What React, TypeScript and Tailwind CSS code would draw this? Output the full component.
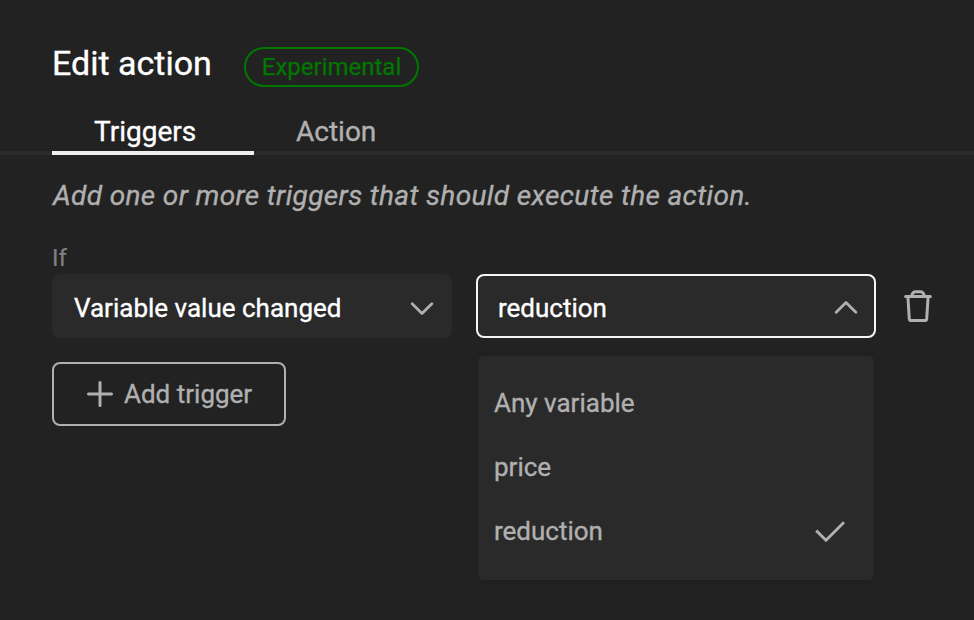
import React from "react";

function Chevron({ up = false }: { up?: boolean }) {
  return (
    <svg
      width="24"
      height="14"
      viewBox="0 0 24 14"
      fill="none"
      stroke="#b0b0b0"
      strokeWidth="2.8"
      strokeLinecap="round"
      strokeLinejoin="round"
      className="shrink-0"
    >
      <path d={up ? "M2.2 11.2 12 1.6l9.8 9.6" : "M2.2 2.8 12 12.4l9.8-9.6"} />
    </svg>
  );
}

function Option({ label, selected = false }: { label: string; selected?: boolean }) {
  return (
    <li className="flex h-16 items-center justify-between pl-4 pr-7">
      <span>{label}</span>
      {selected && (
        <svg width="32" height="24" viewBox="0 0 32 24" fill="none" stroke="#b0b0b0" strokeWidth="2.9">
          <path d="M2.2 11.6 12 21.2 30 3.2" />
        </svg>
      )}
    </li>
  );
}

export default function App() {
  return (
    <main className="h-[620px] w-[974px] overflow-hidden bg-[#222222] font-['Roboto',sans-serif] text-[26px] leading-8 text-[#b0b0b0] [-webkit-text-stroke:0.35px_currentColor]">
      <header className="flex h-[111px] pl-[52px] pt-[43px]">
        <h1 className="w-48 whitespace-nowrap text-[34px] leading-10 text-white">Edit action</h1>
        <span className="mt-1 flex h-10 w-[175px] items-center justify-center rounded-full border-2 border-[#007800] text-[24px] text-[#007800] [-webkit-text-stroke:0.25px_currentColor]">
          Experimental
        </span>
      </header>

      <nav className="flex h-11 bg-[linear-gradient(#2b2b2b,#2b2b2b)] bg-[length:100%_4px] bg-bottom bg-no-repeat pl-[52px] text-[28px]">
        <button className="h-11 w-[202px] border-b-4 border-[#eeeeee] pl-[42px] pt-px text-left text-white">Triggers</button>
        <button className="h-11 w-[180px] pb-1 pl-[42px] pt-px text-left">Action</button>
      </nav>

      <p className="ml-[53px] mt-[25px] whitespace-nowrap text-[28px] italic tracking-[0.36px]">
        Add one or more triggers that should execute the action.
      </p>

      <section className="ml-[52px] mt-[30px]">
        <div className="h-8 text-[24px] text-[#808080] [-webkit-text-stroke:0.2px_currentColor]">If</div>
        <div className="flex items-start gap-6">
          <div className="flex flex-col items-start gap-6">
            <button className="flex h-16 w-[400px] items-center justify-between rounded-lg bg-[#2a2a2a] pl-[22px] pr-[18px] pt-1 text-white">
              Variable value changed
              <Chevron />
            </button>
            <button className="flex h-16 w-[234px] items-center gap-[11px] rounded-lg border-2 border-[#b0b0b0] pl-[33px]">
              <svg width="26" height="26" viewBox="0 0 26 26" stroke="#b0b0b0" strokeWidth="3" strokeLinecap="round">
                <path d="M13 1.5v23M1.5 13h23" />
              </svg>
              Add trigger
            </button>
          </div>
          <div className="w-[400px]">
            <button className="flex h-16 w-full items-center justify-between rounded-lg border-2 border-[#f5f5f5] bg-[#2a2a2a] pl-5 pr-4 pt-1 text-white">
              reduction
              <Chevron up />
            </button>
            <ul className="mx-0.5 mt-[18px] h-56 rounded-md bg-[#2a2a2a] pb-[17px] pt-[15px] shadow-[0_2px_8px_rgba(0,0,0,0.1)]">
              <Option label="Any variable" />
              <Option label="price" />
              <Option label="reduction" selected />
            </ul>
          </div>
          <button aria-label="Delete trigger" className="mt-4">
            <svg
              width="28"
              height="34"
              viewBox="0 0 28 34"
              fill="none"
              stroke="#b0b0b0"
              strokeWidth="3"
              strokeLinecap="round"
              strokeLinejoin="round"
              className="ml-1"
            >
              <path d="M1.6 6.5h24.8M7.6 6.2c.5-2.9 2-4.5 4.2-4.5h4.4c2.2 0 3.7 1.6 4.2 4.5M3.9 7l1.4 21.8c.1 1.2.7 1.7 1.8 1.7h13.8c1.1 0 1.7-.5 1.8-1.7L24.1 7" />
            </svg>
          </button>
        </div>
      </section>
    </main>
  );
}
